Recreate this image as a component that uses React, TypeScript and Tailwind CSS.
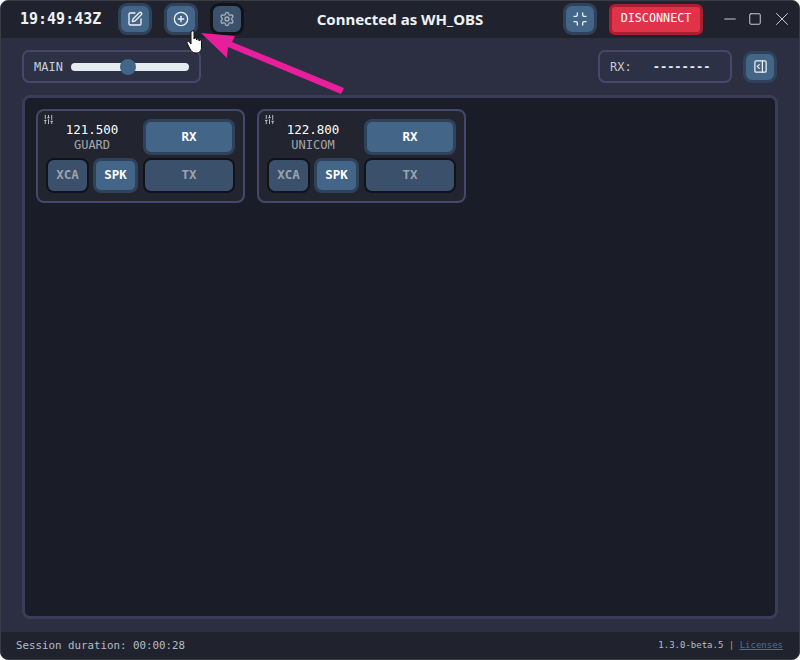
import { SquarePen, CirclePlus, Settings, Minimize, Minus, Square, X, PanelRightOpen, SlidersVertical } from 'lucide-react'
import type { ReactNode } from 'react'

const MONO = "font-['DejaVu_Sans_Mono','Liberation_Mono',monospace]"

function IconButton({ children, off }: { children: ReactNode; off?: boolean }) {
  return (
    <button
      className={`flex h-[32px] w-[34px] items-center justify-center rounded-[9px] ${
        off ? 'border-[3px] border-[#11131b] bg-[#3a506b] text-[#a9b2bd]' : 'border-[3px] border-[#2f4259] bg-[#436588] text-[#eef1f4]'
      }`}
    >
      {children}
    </button>
  )
}

function Key({ label, on, className }: { label: string; on?: boolean; className: string }) {
  return (
    <button
      className={`flex items-center justify-center rounded-[8px] text-[12.5px] font-bold ${MONO} ${
        on ? 'border-[3px] border-[#2f4259] bg-[#436588] text-white' : 'border-2 border-[#11131b] bg-[#3a506b] text-[#9aa3ad]'
      } ${className}`}
    >
      {label}
    </button>
  )
}

function RadioCard({ freq, name }: { freq: string; name: string }) {
  return (
    <div className="relative grid h-[94px] w-[209px] grid-cols-[43px_45px_92px] grid-rows-[36px_35px] gap-x-[4px] gap-y-[3px] rounded-[8px] border-2 border-[#45486a] bg-[#22252f] pl-[8px] pt-[8px]">
      <SlidersVertical className="absolute left-[5px] top-[3px] h-[11px] w-[11px] text-[#c5c9d0]" strokeWidth={2} />
      <div className={`col-span-2 flex flex-col items-center pt-[3px] ${MONO}`}>
        <span className="text-[12.5px] leading-[15px] text-white">{freq}</span>
        <span className="text-[12px] leading-[16px] text-[#a3a7ad]">{name}</span>
      </div>
      <Key label="RX" on className="ml-[1px] h-[36px] w-[92px]" />
      <Key label="XCA" className="h-[35px]" />
      <Key label="SPK" on className="h-[35px]" />
      <Key label="TX" className="ml-[1px] h-[35px] w-[92px]" />
    </div>
  )
}

export default function App() {
  return (
    <div className={`relative flex h-[660px] w-[800px] flex-col overflow-hidden rounded-[8px] border border-[#3b3d44] bg-[#2c2e42] text-white ${MONO}`}>
      {/* Title bar */}
      <div className="flex h-[37px] shrink-0 items-center bg-[#20232e] pb-[1px] pl-[19px]">
        <span className="w-[98px] text-[15px] font-bold text-[#eef1f4]">19:49:43Z</span>
        <div className="flex items-center gap-[12px]">
          <IconButton><SquarePen size={16} /></IconButton>
          <IconButton><CirclePlus size={16} /></IconButton>
          <IconButton off><Settings size={16} /></IconButton>
        </div>
        <span className="ml-[71px] w-[170px] whitespace-nowrap text-center font-['Noto_Sans',sans-serif] text-[15px] font-bold text-[#eef1f4]">Connected as WH_OBS</span>
        <div className="ml-[78px]">
          <IconButton><Minimize size={16} /></IconButton>
        </div>
        <button className="ml-[12px] flex h-[31px] w-[94px] items-center justify-center rounded-[6px] border-[3px] border-[#a81f30] bg-[#e0334a] text-[11.75px] text-white">
          DISCONNECT
        </button>
        <div className="ml-[18px] flex items-center gap-[9px] text-[#c8cad0]">
          <Minus size={18} strokeWidth={1} absoluteStrokeWidth />
          <Square size={14} strokeWidth={1} absoluteStrokeWidth />
          <X size={22} strokeWidth={1} absoluteStrokeWidth />
        </div>
      </div>

      {/* Controls */}
      <div className="mt-[12px] flex h-[33px] shrink-0 items-center pl-[21px] pr-[22px]">
        <div className="flex h-[33px] w-[179px] items-center gap-[8px] rounded-[7px] border-2 border-[#45486a] bg-[#2d3145] pl-[10px]">
          <span className="text-[12px] text-[#c4d0dc]">MAIN</span>
          <div className="relative h-[8px] w-[118px] rounded-full bg-[#e8ebee]">
            <span className="absolute left-[49px] top-[-4px] h-[16px] w-[16px] rounded-full bg-[#436588]" />
          </div>
        </div>
        <div className="ml-auto flex h-[33px] w-[134px] items-center gap-[21px] rounded-[7px] border-2 border-[#45486a] bg-[#2d3145] pl-[10px] text-[12px] text-[#c4c8d0]">
          <span>RX:</span>
          <span className="font-bold text-[#e8ebee]">--------</span>
        </div>
        <div className="ml-[11px]">
          <IconButton><PanelRightOpen size={15} /></IconButton>
        </div>
      </div>

      {/* Radios */}
      <div className="mx-[21px] mt-[12px] flex h-[524px] items-start gap-[12px] rounded-[8px] border-[3px] border-[#3a3d58] bg-[#1a1c27] pl-[11px] pt-[11px]">
        <RadioCard freq="121.500" name="GUARD" />
        <RadioCard freq="122.800" name="UNICOM" />
      </div>

      {/* Footer */}
      <div className="mt-auto flex h-[27px] shrink-0 items-center justify-between bg-[#20232e] pl-[15px] pr-[16px] pt-[1px] text-[#b4bcc6]">
        <span className="text-[10.8px]">Session duration: 00:00:28</span>
        <span className="text-[9px]">
          1.3.0-beta.5 <span className="text-[#c79a4a]">|</span> <span className="text-[#4f6f92] underline">Licenses</span>
        </span>
      </div>

      {/* Annotation arrow */}
      <svg className="pointer-events-none absolute left-[-1px] top-[-1px]" width="800" height="660" viewBox="0 0 800 660">
        <path d="M201 33 L235 36 L232 42 L344 88 L341 94 L228 47 L227 58 Z" fill="#e91e9c" />
      </svg>
      <svg className="pointer-events-none absolute left-[185px] top-[29px]" width="19" height="24" viewBox="0 0 19 24">
        <path d="M5 2 C5 .5 8 .5 8 2 V9 C8 7.5 10.5 7.5 10.5 9 V10 C10.5 8.5 13 8.5 13 10 V11 C13 9.5 15.5 9.5 15.5 11 V17 C15.5 21 13.5 23 10 23 C6.5 23 5 21 3.5 18 L1 13 C.5 11.5 2.5 10.5 3.5 12 L5 14 Z" fill="#fff" stroke="#111" strokeWidth="1" />
      </svg>
    </div>
  )
}
